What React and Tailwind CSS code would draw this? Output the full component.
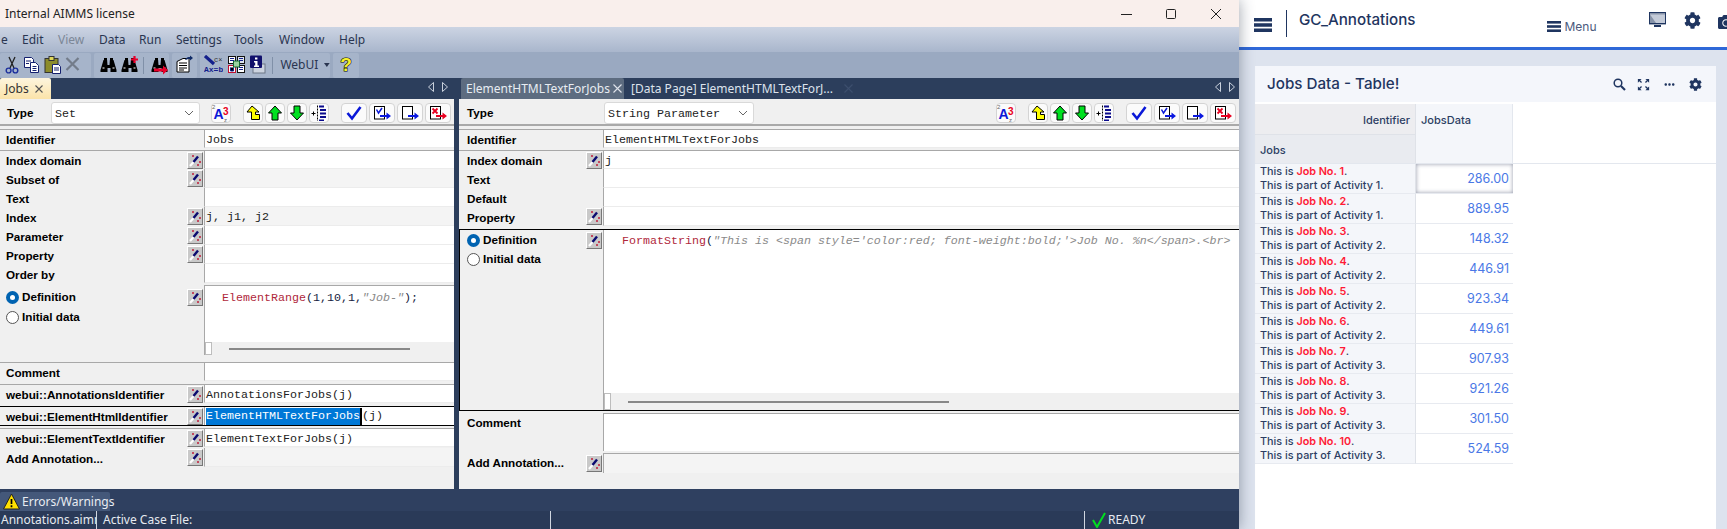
import React from "react";
import { FaCog, FaCamera } from "react-icons/fa";
import { MdZoomOutMap, MdMoreHoriz } from "react-icons/md";

const Ico = ({ children, w = 20, h = 20, className = "" }) => (
  <svg width={w} height={h} viewBox={`0 0 ${w} ${h}`} className={"shrink-0 " + className}>{children}</svg>
);

const Scissors = () => (
  <Ico w={14}>
    <path d="M4 2 L9 13 M10 2 L5 13" stroke="#222" strokeWidth="1.3" fill="none" />
    <circle cx="3.6" cy="15.5" r="2.4" fill="none" stroke="#1c2f9c" strokeWidth="1.4" />
    <circle cx="10.4" cy="15.5" r="2.4" fill="none" stroke="#1c2f9c" strokeWidth="1.4" />
  </Ico>
);
const Copy = () => (
  <Ico w={17}>
    <path d="M1.5 2.5h7l2 2v8h-9z" fill="#fff" stroke="#14206e" />
    <path d="M7.5 7.5h5l3 3v7h-8z" fill="#fff" stroke="#14206e" />
    <path d="M3 6h5M3 8.5h3M9.5 11.5h4M9.5 13.5h4M9.5 15.5h4" stroke="#14206e" />
  </Ico>
);
const Paste = () => (
  <Ico w={17}>
    <rect x="1" y="3.5" width="13" height="14" fill="#8c8c2c" stroke="#333" />
    <rect x="5" y="1.5" width="5" height="4" fill="#ded75a" stroke="#333" />
    <path d="M8.5 9.5h6l2 2v7h-8z" fill="#fff" stroke="#14206e" />
    <path d="M10 13h5M10 15h5" stroke="#14206e" />
  </Ico>
);
const Del = () => (
  <Ico w={15}>
    <path d="M1.5 3 L13.5 15 M13.5 3 L1.5 15" stroke="#737c8a" strokeWidth="2.2" />
  </Ico>
);
const Binos = ({ extra }) => (
  <Ico w={17}>
    <path d="M3.5 5h3.6l.4 5h2l.4-5h3.6l3 10v2h-6v-4h-3v4H.5v-2z" fill="#000" />
    <path d="M4 3h3v2H4zM10 3h3v2h-3z" fill="#000" />
    <path d="M2.5 13h2M12.5 13h2" stroke="#fff" />
    {extra === "plus" && <path d="M13.5 1v7M10 4.5h7" stroke="#e8002a" strokeWidth="2.2" />}
    {extra === "arrow" && <path d="M3 13.5h9v-3l5 4.5-5 4.5v-3H3z" fill="#e8002a" />}
  </Ico>
);
const Props = () => (
  <Ico w={17}>
    <path d="M1 6.5 L7 3.5 H13 V17 H1z" fill="#fff" stroke="#000" />
    <path d="M3 8h8M3 10.5h8M3 13h8M3 15h5" stroke="#000" />
    <path d="M9 5 C10 2.5 12 2 14 2 V0.5 L17 3 14 5.5 V4 C12 4 11 4.5 9 5z" fill="#0f2a66" />
  </Ico>
);
const MathI = () => (
  <Ico w={19}>
    <path d="M1 1 L10 9" stroke="#14208c" strokeWidth="3.2" />
    <text x="10" y="7" fontSize="7" fontFamily="Liberation Mono" fill="#333">c×</text>
    <text x="0" y="17" fontSize="8" fontWeight="700" fontFamily="Liberation Mono" fill="#14208c">Ax=b</text>
  </Ico>
);
const Multi = () => (
  <Ico w={17}>
    <rect x="0.5" y="1.5" width="7" height="7" fill="#fff" stroke="#111" />
    <rect x="9.5" y="1.5" width="7" height="7" fill="#dfe6f0" stroke="#111" />
    <rect x="0.5" y="10.5" width="7" height="7" fill="#fff" stroke="#c01030" />
    <rect x="9.5" y="10.5" width="7" height="7" fill="#fff" stroke="#111" />
    <rect x="5.5" y="6" width="6" height="6" fill="#9bd3a0" stroke="#116633" />
    <path d="M2 3.5h4M2 5.5h4M11 3.5h4M11 5.5h4M11 12.5h4M11 14.5h4M2.5 12.5v3.5h3V12.5" stroke="#14208c" />
  </Ico>
);
const Info = () => (
  <Ico w={17}>
    <rect x="4" y="9" width="12" height="9" fill="#ccd3df" stroke="#6d7686" />
    <rect x="1" y="0.5" width="12" height="12.5" rx="1" fill="#10106c" />
    <path d="M6 2.5h2.4v2H6zM5 6h3.5v4.5H10V12H5v-1.5h1.2v-3H5z" fill="#fff" />
  </Ico>
);
const Help = () => (
  <Ico w={16}>
    <text x="8" y="16" textAnchor="middle" fontSize="19" fontWeight="700" fontFamily="Liberation Sans" fill="#f7ef2a" stroke="#000" strokeWidth="1.1" paintOrder="stroke">?</text>
  </Ico>
);
const AZ = () => (
  <Ico w={18} h={18}>
    <text x="0" y="5" fontSize="6" fontFamily="Liberation Sans" fill="#666">2</text>
    <text x="1.5" y="15" fontSize="14" fontWeight="700" fontFamily="Liberation Sans" fill="#0a18d8">A</text>
    <text x="11" y="11" fontSize="10" fontWeight="700" fontFamily="Liberation Sans" fill="#e80020">3</text>
    <text x="12" y="18" fontSize="6" fontFamily="Liberation Sans" fill="#666">z</text>
  </Ico>
);
const UpBent = () => (
  <Ico w={16} h={16}>
    <path d="M7 1 L14 7 H10.5 V9.5 H14.5 V14.5 H6.5 V7 H2z" fill="#ffff00" stroke="#000" />
  </Ico>
);
const Up = () => (
  <Ico w={16} h={16}>
    <path d="M8 1 L14.5 8 H11 V15 H5 V8 H1.5z" fill="#00e020" stroke="#000" />
  </Ico>
);
const Down = () => (
  <Ico w={16} h={16}>
    <path d="M8 15 L14.5 8 H11 V1 H5 V8 H1.5z" fill="#00e020" stroke="#000" />
  </Ico>
);
const Indent = () => (
  <Ico w={16} h={16}>
    <path d="M0.5 8.5h4M2.5 6.5v4" stroke="#000" />
    <path d="M6.5 0.5V16" stroke="#000" strokeDasharray="2 1" />
    <path d="M8 1.5h5M9 5h6M9 8.5h6M9 12h6M8 15.5h5" stroke="#0a0a8c" strokeWidth="2" />
  </Ico>
);
const Check = () => (
  <Ico w={16} h={16}>
    <path d="M1.5 8 L6 13.5 L14.5 2" fill="none" stroke="#0a18d8" strokeWidth="2.6" />
  </Ico>
);
const PageGo = ({ kind }) => (
  <Ico w={20} h={18}>
    <rect x="2.5" y="2.5" width="10" height="12.5" fill="#fff" stroke="#000" />
    {kind === "check" && <path d="M4.5 5.5 L6.5 9 L10 4" fill="none" stroke="#0a18d8" strokeWidth="1.5" />}
    {kind === "x" && <path d="M4.5 4.5 L9.5 9.5 M9.5 4.5 L4.5 9.5" stroke="#e80020" strokeWidth="1.8" />}
    <path d="M8 11h6.5V8.5 L19 12 14.5 15.5V13H8z" fill={kind === "x" ? "#e80020" : "#0a18e0"} />
  </Ico>
);
const Warn = () => (
  <Ico w={17} h={17}>
    <path d="M8.5 1 L16.5 16 H0.5z" fill="#ffe100" stroke="#222" />
    <path d="M8.5 6v5M8.5 12.3v1.9" stroke="#000" strokeWidth="1.7" />
  </Ico>
);
const GreenCheck = () => (
  <Ico w={14} h={16}>
    <path d="M1 8 L5 15 L13 1" fill="none" stroke="#00e020" strokeWidth="2" />
  </Ico>
);
const Monitor = () => (
  <Ico w={17} h={16}>
    <rect x="0.5" y="0.5" width="16" height="11" fill="#c4cbd8" stroke="#1f3560" />
    <path d="M1 1h15v1.6H1zM1 2.6l6 8.4H1z" fill="#8793a8" />
    <path d="M5 13h7v2H5z" fill="#1f3560" />
    <path d="M0 11h17v1.4H0z" fill="#1f3560" />
  </Ico>
);
const Bars = ({ w, h, t, className = "" }) => (
  <svg width={w} height={h} viewBox={`0 0 ${w} ${h}`} className={"shrink-0 " + className}>
    <rect width={w} height={t} fill="#1f3560" />
    <rect y={(h - t) / 2} width={w} height={t} fill="#1f3560" />
    <rect y={h - t} width={w} height={t} fill="#1f3560" />
  </svg>
);
const Loupe = ({ className = "" }) => (
  <svg width="13" height="13" viewBox="0 0 13 13" className={"shrink-0 " + className}>
    <circle cx="5" cy="5" r="3.8" fill="none" stroke="#1f3560" strokeWidth="1.5" />
    <path d="M8 8 L12 12" stroke="#1f3560" strokeWidth="2.2" />
  </svg>
);

const Wand = ({ className = "" }) => (
  <div className={"w-[16px] h-[17px] bg-[#c9c9c9] border-t border-l border-white border-b border-r border-b-[#777] border-r-[#777] flex items-center justify-center shrink-0 " + className}>
    <Ico w={14} h={15}>
      <path d="M2 13 L6 8.5" stroke="#fff" strokeWidth="2.2" />
      <path d="M5.5 9 L10 3.5" stroke="#0a0a70" strokeWidth="2.4" />
      <path d="M4 3h2M5 2v2M11 9h2M12 8v2M9 12h2M10 11v2" stroke="#c01030" strokeWidth="0.9" />
    </Ico>
  </div>
);

const Radio = ({ on }) =>
  on ? (
    <span className="w-[13px] h-[13px] rounded-full bg-[#0063b1] flex items-center justify-center shrink-0">
      <span className="w-[5px] h-[5px] rounded-full bg-white" />
    </span>
  ) : (
    <span className="w-[13px] h-[13px] rounded-full border border-[#555] bg-white shrink-0" />
  );

const Btn = ({ wide, children, className = "" }) => (
  <div className={(wide ? "w-[26px] " : "w-[20px] ") + "h-[20px] bg-[#fbfbfb] border border-[#d4d4d4] rounded-[4px] flex items-center justify-center shrink-0 " + className}>{children}</div>
);

const ButtonSet = () => (
  <div className="ml-auto flex items-center gap-[2px] pr-[3px]">
    <Btn className="mr-[10px]"><AZ /></Btn>
    <Btn><UpBent /></Btn>
    <Btn><Up /></Btn>
    <Btn><Down /></Btn>
    <Btn className="mr-[10px]"><Indent /></Btn>
    <Btn wide><Check /></Btn>
    <Btn wide><PageGo kind="check" /></Btn>
    <Btn wide><PageGo /></Btn>
    <Btn wide><PageGo kind="x" /></Btn>
  </div>
);

const mono = "font-['Liberation_Mono',monospace] text-[11.67px] leading-[14px] text-[#222] whitespace-pre";
const lbl = "font-['Liberation_Sans',sans-serif] font-bold text-[11.7px] leading-[14px] text-black whitespace-nowrap";

const LeftRow = ({ label, wand, value, shade, className = "" }) => (
  <div className={"h-[19px] flex items-stretch shrink-0 " + className}>
    <div className="w-[204px] flex items-center justify-between pl-[6px] pr-px shrink-0">
      <span className={lbl + " mt-[2px]"}>{label}</span>
      {wand && <Wand />}
    </div>
    <div className={"flex-1 border-l border-l-[#a8a8a8] border-b border-b-[#ececec] flex items-center pl-px pt-[2px] overflow-hidden " + (shade ? "bg-[#f4f4f4]" : "bg-white")}>
      {value && <span className={mono}>{value}</span>}
    </div>
  </div>
);

const RightRow = ({ label, wand, value, className = "" }) => (
  <div className={"h-[19px] flex items-stretch shrink-0 " + className}>
    <div className="w-[144px] flex items-center justify-between pl-[8px] pr-px shrink-0">
      <span className={lbl + " mt-[2px]"}>{label}</span>
      {wand && <Wand />}
    </div>
    <div className="flex-1 border-l border-l-[#a8a8a8] border-b border-b-[#ececec] bg-white flex items-center pl-px pt-[2px] overflow-hidden">
      {value && <span className={mono}>{value}</span>}
    </div>
  </div>
);

const Scroll = ({ className = "", barClass = "" }) => (
  <div className={"flex items-center bg-[#f0f0f0] shrink-0 " + className}>
    <div className="w-[7px] h-full bg-white border border-[#bdbdbd] shrink-0" />
    <div className={"h-[2px] bg-[#888] " + barClass} />
  </div>
);

const Select = ({ text, className = "" }) => (
  <div className={"h-[22px] bg-white border border-[#d9d9d9] rounded-[3px] flex items-center justify-between pl-[3px] pr-[5px] shrink-0 " + className}>
    <span className={mono + " mt-px"}>{text}</span>
    <svg width="10" height="6" viewBox="0 0 10 6"><path d="M1 1 L5 5 L9 1" fill="none" stroke="#666" /></svg>
  </div>
);

const Arrows = ({ className = "" }) => (
  <div className={"flex items-center gap-[8px] h-[17px] " + className}>
    <svg width="6" height="10" viewBox="0 0 6 10"><path d="M5.5 .5 L.5 5 L5.5 9.5z" fill="none" stroke="#c9d0dc" /></svg>
    <svg width="6" height="10" viewBox="0 0 6 10"><path d="M.5 .5 L5.5 5 L.5 9.5z" fill="none" stroke="#c9d0dc" /></svg>
  </div>
);

const menu = [
  ["e", "w-[21px]"], ["Edit", "w-[36px]"], ["View", "w-[41px] text-[#7c8797]"], ["Data", "w-[40px]"], ["Run", "w-[37px]"],
  ["Settings", "w-[58px]"], ["Tools", "w-[45px]"], ["Window", "w-[60px]"], ["Help", "w-[40px]"],
];

const Group = ({ className = "", children }) => (
  <div className={"h-[25px] bg-[#a6b4ca] rounded-[2px] flex items-center shrink-0 " + className}>{children}</div>
);

const jobs = [
  [1, 1, "286.00"], [2, 1, "889.95"], [3, 2, "148.32"], [4, 2, "446.91"], [5, 2, "923.34"],
  [6, 2, "449.61"], [7, 3, "907.93"], [8, 3, "921.26"], [9, 3, "301.50"], [10, 3, "524.59"],
];

export default function App() {
  return (
    <div className="w-[1727px] h-[529px] flex overflow-hidden bg-[#dde3ee] font-['Noto_Sans',sans-serif]">
      {/* Desktop window */}
      <div className="w-[1239px] h-full flex flex-col shrink-0 relative z-10 shadow-[0_0_14px_rgba(40,50,70,0.45)]">
        <div className="h-[27px] bg-[#f9efec] flex items-center justify-between shrink-0">
          <span className="pl-[5px] text-[12px] text-[#222]">Internal AIMMS license</span>
          <div className="flex items-center pr-[16px] gap-[31px]">
            <svg width="14" height="14" viewBox="0 0 14 14"><path d="M2 7.5h11" stroke="#222" /></svg>
            <svg width="14" height="14" viewBox="0 0 14 14"><rect x="2.5" y="2.5" width="9" height="9" rx="1" fill="none" stroke="#222" /></svg>
            <svg width="14" height="14" viewBox="0 0 14 14"><path d="M2 2 L12 12 M12 2 L2 12" stroke="#222" /></svg>
          </div>
        </div>
        <div className="h-[25px] bg-gradient-to-b from-[#ccd4e3] to-[#a9b6cc] flex items-center pl-px pt-px shrink-0">
          {menu.map(([t, c]) => (
            <span key={t} className={"text-[12px] text-[#2a3550] " + c}>{t}</span>
          ))}
        </div>
        <div className="h-[26px] bg-[#9aa9c1] flex items-center gap-[3px] shrink-0">
          <Group className="w-[91px] gap-[4px] pl-[5px]">
            <Scissors /><Copy /><Paste /><Del />
          </Group>
          <Group className="w-[75px] pl-[6px]">
            <Binos /><span className="w-[4px]" /><Binos extra="plus" />
            <span className="w-px h-[17px] bg-[#8090a8] ml-[5px] mr-[7px]" />
            <Binos extra="arrow" />
          </Group>
          <Group className="w-[25px] pl-[4px]"><Props /></Group>
          <Group className="w-[130px] pl-[4px]">
            <MathI /><span className="w-[5px]" /><Multi /><span className="w-[5px]" /><Info />
            <span className="w-px h-[17px] bg-[#8090a8] ml-[6px] mr-[7px]" />
            <span className="text-[12px] text-[#2a3550]">WebUI</span>
            <svg width="6" height="4" viewBox="0 0 6 4" className="ml-[6px]"><path d="M0 0h6L3 4z" fill="#2a3550" /></svg>
          </Group>
          <Group className="w-[26px] pl-[5px]"><Help /></Group>
        </div>
        {/* Tab strip */}
        <div className="h-[21px] bg-[#2c3e5c] flex shrink-0">
          <div className="w-[459px] flex shrink-0">
            <div className="w-[51px] h-[21px] rounded-t-[2px] bg-gradient-to-b from-[#fdf5de] to-[#fbe3a9] flex items-center pl-[5px] gap-[6px] text-[12px] text-[#333]">
              Jobs
              <svg width="8" height="8" viewBox="0 0 8 8"><path d="M.5 .5 L7.5 7.5 M7.5 .5 L.5 7.5" stroke="#555" strokeWidth="1.1" /></svg>
            </div>
            <Arrows className="ml-auto mr-[11px]" />
          </div>
          <div className="flex-1 flex items-stretch">
            <div className="ml-[2px] w-[163px] h-[21px] rounded-t-[2px] bg-[#5d6c80] flex items-center pl-[5px] gap-[3px] text-[12px] text-[#e8ecf2] whitespace-nowrap">
              ElementHTMLTextForJobs
              <svg width="9" height="9" viewBox="0 0 9 9" className="shrink-0"><path d="M.5 .5 L8.5 8.5 M8.5 .5 L.5 8.5" stroke="#dfe3ea" strokeWidth="1.1" /></svg>
            </div>
            <span className="ml-[7px] self-center text-[12px] text-[#dde3ec] whitespace-nowrap">[Data Page] ElementHTMLTextForJ...</span>
            <svg width="9" height="9" viewBox="0 0 9 9" className="ml-[11px] self-center shrink-0"><path d="M.5 .5 L8.5 8.5 M8.5 .5 L.5 8.5" stroke="#3d4f6e" strokeWidth="1.1" /></svg>
            <Arrows className="ml-auto mr-[4px]" />
          </div>
        </div>
        {/* Attribute panes */}
        <div className="h-[390px] flex shrink-0 bg-[#2c3e5c]">
          <div className="w-[454px] bg-[#f0f0f0] flex flex-col shrink-0 overflow-hidden">
            <div className="h-[27px] pt-[3px] flex items-center border-b-2 border-b-[#a9a9a9] shrink-0">
              <span className={lbl + " pl-[7px] w-[51px]"}>Type</span>
              <Select text="Set" className="w-[149px]" />
              <ButtonSet />
            </div>
            <LeftRow label="Identifier" value="Jobs" className="mt-[3px] border-t border-t-[#a8a8a8]" />
            <LeftRow label="Index domain" wand className="mt-[2px] border-t border-t-[#a8a8a8]" />
            <LeftRow label="Subset of" wand shade />
            <LeftRow label="Text" />
            <LeftRow label="Index" wand value="j, j1, j2" shade />
            <LeftRow label="Parameter" wand />
            <LeftRow label="Property" wand />
            <LeftRow label="Order by" />
            <div className="h-[70px] mt-[2px] flex shrink-0">
              <div className="w-[204px] flex flex-col pl-[6px] pr-px shrink-0">
                <div className="flex items-center justify-between h-[20px] mt-[2px]">
                  <div className="flex items-center gap-[3px]"><Radio on /><span className={lbl}>Definition</span></div>
                  <Wand />
                </div>
                <div className="flex items-center gap-[3px] mt-[3px]"><Radio /><span className={lbl}>Initial data</span></div>
              </div>
              <div className="flex-1 flex flex-col border-l border-l-[#a8a8a8] border-t border-t-[#a8a8a8] min-w-0">
                <div className="flex-1 bg-white pl-[17px] pt-[2px] leading-[14px] overflow-hidden">
                  <span className={mono}><span className="text-[#b0283c]">ElementRange</span><span className="text-[#16223e]">(1,10,1,</span><span className="italic text-[#8a8a8a]">"Job-"</span><span className="text-[#16223e]">);</span></span>
                </div>
                <Scroll className="h-[13px]" barClass="ml-[17px] w-[181px]" />
              </div>
            </div>
            <LeftRow label="Comment" className="mt-[7px] border-t border-t-[#a8a8a8]" />
            <LeftRow label="webui::AnnotationsIdentifier" wand value="AnnotationsForJobs(j)" className="mt-[3px] border-t border-t-[#a8a8a8]" />
            <div className="h-[20px] mt-[3px] flex items-stretch border-y border-y-black shrink-0">
              <div className="w-[204px] flex items-center justify-between pl-[6px] pr-px shrink-0">
                <span className={lbl + " mt-px"}>webui::ElementHtmlIdentifier</span>
                <Wand />
              </div>
              <div className="flex-1 bg-white flex items-center pl-px border-l border-l-[#a8a8a8]">
                <span className={mono + " bg-[#0078d7] text-white leading-[17px]"}>ElementHTMLTextForJobs</span>
                <span className="w-[2px] h-[17px] bg-black" />
                <span className={mono}>(j)</span>
              </div>
            </div>
            <LeftRow label="webui::ElementTextIdentifier" wand value="ElementTextForJobs(j)" className="mt-[2px] border-t border-t-[#a8a8a8]" />
            <LeftRow label="Add Annotation..." wand shade className="mt-px" />
          </div>
          <div className="w-[5px] shrink-0" />
          <div className="flex-1 bg-[#f0f0f0] flex flex-col overflow-hidden">
            <div className="h-[27px] pt-[3px] flex items-center border-b-2 border-b-[#a9a9a9] shrink-0">
              <span className={lbl + " pl-[8px] w-[145px]"}>Type</span>
              <Select text="String Parameter" className="w-[150px]" />
              <ButtonSet />
            </div>
            <RightRow label="Identifier" value="ElementHTMLTextForJobs" className="mt-[3px] border-t border-t-[#a8a8a8]" />
            <RightRow label="Index domain" wand value="j" className="mt-[2px] border-t border-t-[#a8a8a8]" />
            <RightRow label="Text" />
            <RightRow label="Default" />
            <RightRow label="Property" wand />
            <div className="h-[182px] mt-[3px] flex border-y border-y-black border-l border-l-black shrink-0">
              <div className="w-[143px] flex flex-col pl-[7px] pr-px shrink-0">
                <div className="flex items-center justify-between h-[18px] mt-[1px]">
                  <div className="flex items-center gap-[3px]"><Radio on /><span className={lbl}>Definition</span></div>
                  <Wand />
                </div>
                <div className="flex items-center gap-[3px] mt-[3px]"><Radio /><span className={lbl}>Initial data</span></div>
              </div>
              <div className="flex-1 flex flex-col border-l border-l-[#a8a8a8] min-w-0">
                <div className="flex-1 bg-white pl-[18px] pt-[1px] leading-[14px] overflow-hidden">
                  <span className={mono}><span className="text-[#b0283c]">FormatString</span><span className="text-[#16223e]">(</span><span className="italic text-[#8a8a8a]">"This is &lt;span style='color:red; font-weight:bold;'&gt;Job No. %n&lt;/span&gt;.&lt;br&gt;</span></span>
                </div>
                <Scroll className="h-[17px]" barClass="ml-[17px] w-[321px]" />
              </div>
            </div>
            <div className="h-[38px] mt-[2px] flex shrink-0">
              <div className={lbl + " w-[144px] pl-[8px] pt-[3px]"}>Comment</div>
              <div className="flex-1 bg-white border-l border-t border-[#a8a8a8]" />
            </div>
            <div className="h-[20px] mt-[2px] flex shrink-0">
              <div className="w-[144px] flex items-center justify-between pl-[8px] pr-px shrink-0">
                <span className={lbl}>Add Annotation...</span>
                <Wand />
              </div>
              <div className="flex-1 bg-[#f4f4f4] border-l border-t border-[#a8a8a8]" />
            </div>
          </div>
        </div>
        <div className="h-[22px] bg-[#2f4060] flex items-end shrink-0">
          <div className="w-[110px] h-[19px] bg-[#44587a] rounded-t-[2px] flex items-center pl-[3px] gap-[2px] text-[12px] text-[#e8ecf2]">
            <Warn />Errors/Warnings
          </div>
        </div>
        <div className="flex-1 bg-[#2a3a58] flex items-stretch text-[12px] text-[#e6eaf0]">
          <span className="w-[97px] pl-px border-r border-r-[#d0d6e0] overflow-hidden whitespace-nowrap leading-[18px]">Annotations.aimms</span>
          <span className="w-[454px] pl-[6px] border-r border-r-[#d0d6e0] leading-[18px]">Active Case File:</span>
          <span className="w-[534px] border-r border-r-[#d0d6e0]" />
          <span className="flex items-center pl-[7px] gap-[2px] leading-[18px]"><GreenCheck />READY</span>
        </div>
      </div>

      {/* Web page */}
      <div className="flex-1 flex flex-col min-w-0 font-['Inter',sans-serif] overflow-hidden">
        <div className="h-[50px] bg-white border-b-[3px] border-b-[#2f68d8] flex items-start shrink-0 text-[#1f3560]">
          <Bars w={18} h={14} t={3.5} className="mt-[18px] ml-[15px]" />
          <span className="w-px h-[27px] bg-[#1f3560] mt-[10px] ml-[14px] shrink-0" />
          <span className="ml-[12px] mt-[9px] text-[15.2px] font-medium whitespace-nowrap">GC_Annotations</span>
          <Bars w={14} h={11} t={2.6} className="ml-[131px] mt-[21px]" />
          <span className="ml-[4px] mt-[18px] text-[12px] text-[#4b5a7d]">Menu</span>
          <div className="ml-[52px] mt-[12px]"><Monitor /></div>
          <FaCog className="w-[17px] h-[17px] ml-[18px] mt-[12px] shrink-0" />
          <FaCamera className="w-[16px] h-[16px] ml-[17px] mt-[14px] shrink-0" />
        </div>
        <div className="ml-[16px] mt-[16px] w-[461px] flex-1 bg-white flex flex-col min-h-0">
          <div className="h-[36px] bg-[#f4f6fb] flex items-center pl-[12px] text-[#1f3560] shrink-0">
            <span className="text-[15.2px] font-medium mt-px">Jobs Data - Table!</span>
            <Loupe className="ml-auto" />
            <MdZoomOutMap className="w-[15px] h-[15px] ml-[10px]" />
            <MdMoreHoriz className="w-[15px] h-[15px] ml-[11px]" />
            <FaCog className="w-[13px] h-[13px] ml-[12px] mr-[14px]" />
          </div>
          <div className="flex h-[60px] mt-[2px] border-b border-b-[#e3e7ee] shrink-0 text-[11px] font-medium text-[#2c3e63]">
            <div className="w-[161px] border-r border-r-[#dfe2e8] flex flex-col shrink-0">
              <div className="h-[31px] bg-[#ededf0] border-b border-b-[#dfe2e8] flex items-center justify-end pr-[5px] pt-[2px]">Identifier</div>
              <div className="flex-1 bg-[#e9ebf0] flex items-center pl-[5px] pt-[2px]">Jobs</div>
            </div>
            <div className="w-[97px] bg-[#f4f6fa] border-r border-r-[#e3e7ee] pl-[5px] pt-[8px] shrink-0">JobsData</div>
          </div>
          {jobs.map(([n, a, v], i) => (
            <div key={n} className="flex h-[30px] shrink-0">
              <div className="w-[161px] bg-[#f4f6fa] border-r border-r-[#dfe2e8] border-b border-b-[#e7eaf0] pl-[5px] text-[10.8px] leading-[14px] font-medium text-[#2c3e63] whitespace-nowrap pt-px shrink-0">
                <div>This is <span className="text-[#ff1a36] font-semibold">Job No. {n}</span>.</div>
                <div>This is part of Activity {a}.</div>
              </div>
              <div className={"w-[97px] border-b border-b-[#e7eaf0] flex items-center justify-end pr-[4px] pt-[2px] text-[12.5px] text-[#4a78e6] shrink-0 " + (i === 0 ? "shadow-[inset_0_0_4px_rgba(60,70,100,0.55)]" : "")}>{v}</div>
            </div>
          ))}
        </div>
      </div>
    </div>
  );
}
